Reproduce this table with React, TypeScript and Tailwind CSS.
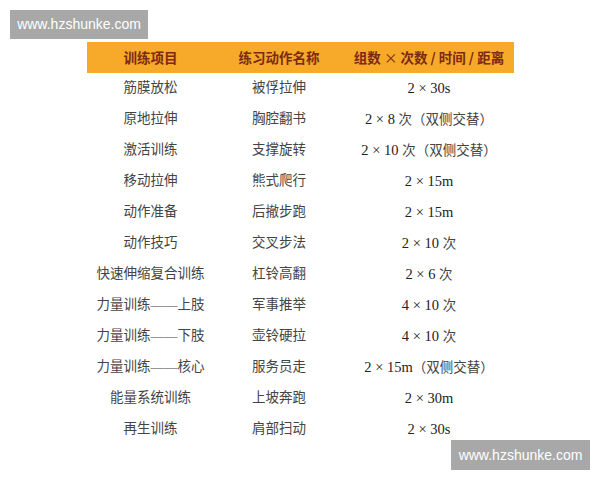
import React from "react";

type Row = { item: string; action: string; amount: string };

const ROWS: Row[] = [
  { item: "筋膜放松", action: "被俘拉伸", amount: "2 × 30s" },
  { item: "原地拉伸", action: "胸腔翻书", amount: "2 × 8 次（双侧交替）" },
  { item: "激活训练", action: "支撑旋转", amount: "2 × 10 次（双侧交替）" },
  { item: "移动拉伸", action: "熊式爬行", amount: "2 × 15m" },
  { item: "动作准备", action: "后撤步跑", amount: "2 × 15m" },
  { item: "动作技巧", action: "交叉步法", amount: "2 × 10 次" },
  { item: "快速伸缩复合训练", action: "杠铃高翻", amount: "2 × 6 次" },
  { item: "力量训练——上肢", action: "军事推举", amount: "4 × 10 次" },
  { item: "力量训练——下肢", action: "壶铃硬拉", amount: "4 × 10 次" },
  { item: "力量训练——核心", action: "服务员走", amount: "2 × 15m（双侧交替）" },
  { item: "能量系统训练", action: "上坡奔跑", amount: "2 × 30m" },
  { item: "再生训练", action: "肩部扫动", amount: "2 × 30s" },
];

const bodyFont = {
  fontFamily: '"Liberation Serif", "Noto Sans CJK SC", serif',
};

// digits and x-signs read a touch larger than the CJK text in the picture
const Amount = ({ text }: { text: string }) => {
  const parts = text.split(/([\u3000-\u9fff\uff00-\uffef]+)/).filter(Boolean);
  return (
    <>
      {parts.map((p, i) =>
        /[\u3000-\u9fff\uff00-\uffef]/.test(p) ? (
          <span key={i}>{p}</span>
        ) : (
          <span key={i} className="text-[14.5px] text-[#222]">
            {p}
          </span>
        ),
      )}
    </>
  );
};

const Watermark = ({ className }: { className: string }) => (
  <div
    className={`absolute flex items-center justify-center bg-[#a8a8a8] text-[14px] text-white ${className}`}
    style={{ fontFamily: '"Liberation Sans", Arial, sans-serif' }}
  >
    www.hzshunke.com
  </div>
);

export default function App() {
  return (
    <div className="relative h-[480px] w-[600px] overflow-hidden bg-white">
      <Watermark className="left-[10px] top-[10px] h-[29px] w-[138px]" />
      <Watermark className="left-[451px] top-[440px] h-[30px] w-[139px]" />

      <div className="pl-[87px] pt-[42px]">
        <div className="w-[427px]">
          <div
            className="grid h-[31px] grid-cols-[127px_130px_170px] items-center bg-[#f7a92a] text-[13.5px] font-bold text-[#7b2a14]"
            style={{ fontFamily: '"Noto Sans CJK SC", sans-serif' }}
          >
            <div className="text-center">训练项目</div>
            <div className="text-center">练习动作名称</div>
            <div className="text-center">
              组数 <span className="font-normal">×</span> 次数 / 时间 / 距离
            </div>
          </div>

          {ROWS.map((row) => (
            <div
              key={row.item + row.action}
              className="grid h-[31px] grid-cols-[127px_130px_170px] items-center text-[13.5px] text-[#444]"
              style={bodyFont}
            >
              <div className="text-center">{row.item}</div>
              <div className="text-center">{row.action}</div>
              <div className="text-center">
                <Amount text={row.amount} />
              </div>
            </div>
          ))}
        </div>
      </div>
    </div>
  );
}
